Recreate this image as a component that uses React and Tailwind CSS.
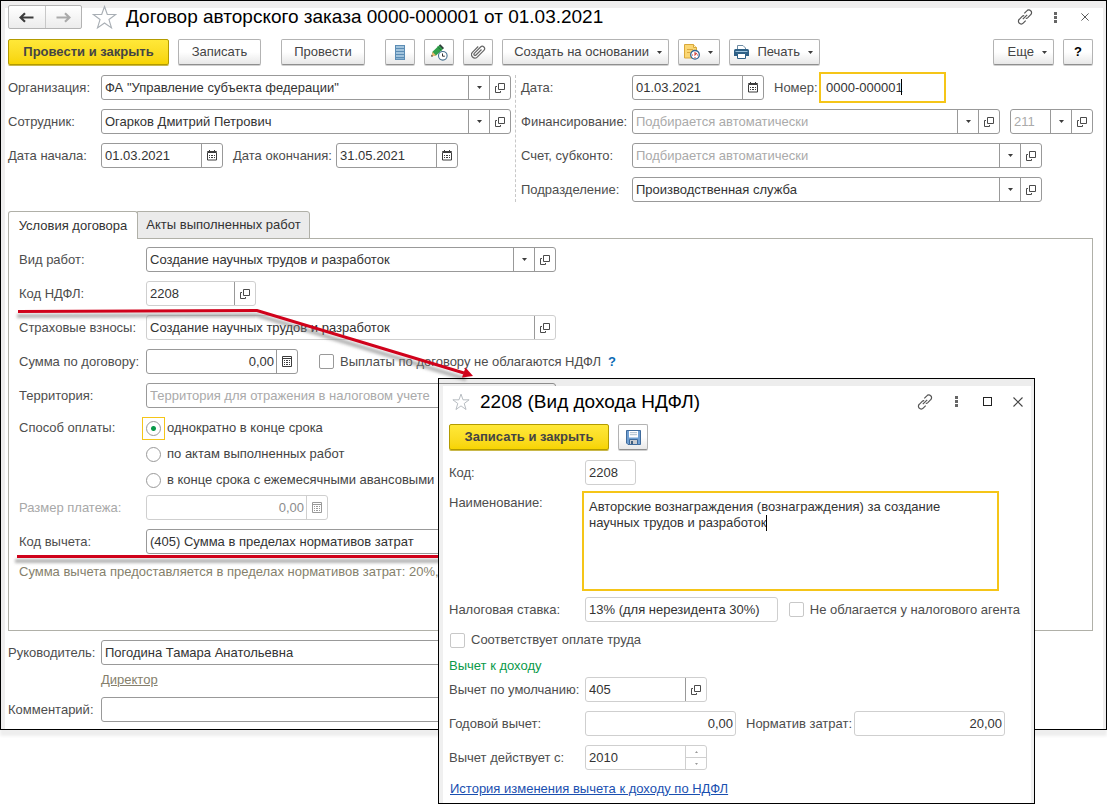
import { useId } from "react";

const FONT = "font-['Liberation_Sans',Arial,sans-serif]";

/* ---------- icons ---------- */

const OpenIcon = () => (
  <svg width="10" height="10" viewBox="0 0 10 10" fill="none" stroke="#4a4a4a" aria-hidden="true">
    <path d="M3.5 0.5h6v6h-6z" />
    <path d="M2 3.5H0.500v6h5V8" />
  </svg>
);

const DownIcon = () => (
  <svg width="5" height="3" viewBox="0 0 5 3" fill="#3c3c3c" aria-hidden="true">
    <path d="M0 0h5L2.500 3z" />
  </svg>
);

const CalendarIcon = () => (
  <svg width="10" height="11" viewBox="0 0 10 11" fill="none" stroke="#3c3c3c" aria-hidden="true">
    <path d="M2.500 0v2M7.500 0v2" />
    <path d="M0.500 1.500h9v1h-9z" />
    <path d="M0.500 3v7h9V3" />
    <path d="M2 5.500h1M4 5.500h2M7 5.500h1M2 7.500h1M4 7.500h2M7 7.500h1" />
  </svg>
);

const CalculatorIcon = ({ muted }) => (
  <svg width="10" height="11" viewBox="0 0 10 11" fill="none" stroke={muted ? "#999" : "#3c3c3c"} aria-hidden="true">
    <path d="M0.500 0.500h9v10h-9zM1 2.500h8" />
    <path d="M2 4.500h1M4 4.500h2M7 4.500h1M2 6.500h1M4 6.500h2M7 6.500h1M2 8.500h1M4 8.500h2M7 8.500h1" />
  </svg>
);

const StarIcon = ({ size }) => (
  <svg width={size} height={size} viewBox="0 0 24 24" fill="none" stroke="#a9afb5" strokeWidth="1.1" aria-hidden="true">
    <path d="M12 1.500l2.700 7.600h8.100l-6.500 4.900 2.400 8L12 17.200 5.300 22l2.400-8L1.200 9.100h8.100z" />
  </svg>
);

const LinkIcon = () => (
  <svg width="16" height="16" viewBox="0 0 16 16" fill="none" stroke="#555" strokeWidth="1.200" aria-hidden="true">
    <path d="M7.300 4.300l2.500-2.500a2.600 2.600 0 0 1 3.900 0 2.600 2.600 0 0 1 0 3.900l-2.900 2.900a2.600 2.600 0 0 1-2 .7" />
    <path d="M8.700 11.700l-2.500 2.500a2.600 2.600 0 0 1-3.900 0 2.600 2.600 0 0 1 0-3.900l2.900-2.900a2.600 2.600 0 0 1 2-.7" />
    <path d="M5.800 10.200l4.400-4.400" />
  </svg>
);

const DotsIcon = () => (
  <svg width="3" height="11" viewBox="0 0 3 11" fill="#666" aria-hidden="true">
    <path d="M0 0h3v3H0zM0 4h3v3H0zM0 8h3v3H0z" />
  </svg>
);

const CloseIcon = ({ size }) => (
  <svg width={size} height={size} viewBox="0 0 10 10" stroke="#444" strokeWidth="1.100" aria-hidden="true">
    <path d="M0.500 0.500l9 9M9.500 0.500l-9 9" />
  </svg>
);

const ArrowIcon = ({ color, flip }) => (
  <svg width="15" height="11" viewBox="0 0 15 11" aria-hidden="true" className={flip ? "rotate-180" : ""}>
    <path d="M14.500 5.500H2M6 1.200L1.500 5.500 6 9.800" fill="none" stroke={color} strokeWidth="2.200" />
  </svg>
);

const ListIcon = () => (
  <svg width="10" height="15" viewBox="0 0 10 15" aria-hidden="true">
    <path d="M0 0h10v15H0z" fill="#5c8db5" />
    <path d="M1 2h8M1 5h8M1 8h8M1 11h8" stroke="#b9d6ea" strokeWidth="1.600" />
    <path d="M1 13.600h8" stroke="#8fb8d6" />
  </svg>
);

const PencilIcon = () => (
  <svg width="17" height="17" viewBox="0 0 17 17" aria-hidden="true">
    <path d="M0.500 12l1-4.200L8.500 1l3.800 3.800-7.200 6.600z" fill="#31a04b" />
    <path d="M6.500 2.800l4 3.800" stroke="#1d7a36" strokeWidth="1" />
    <path d="M8 1.300l1.300-1.100 3.700 3.700-1.200 1.300z" fill="#2d3f3a" />
    <path d="M1.500 7.800l3.600 3.600L0.500 12.500z" fill="#e9b872" />
    <path d="M0.200 12.700l.5-2 1.500 1.500z" fill="#333" />
    <circle cx="11.800" cy="11.800" r="4.300" fill="#fff" stroke="#46708f" strokeWidth="1.100" />
    <path d="M11.500 9.500v2.700h2.300" fill="none" stroke="#333" />
  </svg>
);

const ClipIcon = () => (
  <svg width="15" height="15" viewBox="0 0 15 15" fill="none" stroke="#666" strokeWidth="1.200" aria-hidden="true">
    <path d="M10.500 4.500L5 10a1.200 1.200 0 0 1-1.700-1.700L9.600 2a2.300 2.300 0 0 1 3.300 3.300l-6.700 6.800a3.400 3.400 0 0 1-4.800-4.800L7.200 1.500" />
  </svg>
);

const NoteClockIcon = () => (
  <svg width="16" height="16" viewBox="0 0 16 16" aria-hidden="true">
    <path d="M0.500 0.500h9l3 3v10.500H0.500z" fill="#fbd774" stroke="#d9a83a" />
    <path d="M9.500 0.500v3h3" fill="#fff1c0" stroke="#d9a83a" />
    <path d="M3 5.500h6M3 8.500h3" stroke="#dba93e" />
    <circle cx="11" cy="10.800" r="4.300" fill="#fff" stroke="#2f6494" strokeWidth="1.300" />
    <path d="M11 8v3l1.800-1.800" fill="none" stroke="#d03c32" strokeWidth="1.100" />
    <path d="M11 13v1.200M8 11h1M13 11h1" stroke="#d03c32" />
  </svg>
);

const PrinterIcon = () => (
  <svg width="15" height="14" viewBox="0 0 15 14" aria-hidden="true">
    <path d="M3.500 5V0.500h5.500l2.500 2.500v2" fill="#fff" stroke="#6d8ba3" />
    <path d="M0 5.500q0-1.500 1.500-1.500h12q1.500 0 1.500 1.500V11H0z" fill="#2e6086" />
    <path d="M1.500 6.500h12" stroke="#9cc2dc" />
    <path d="M3.500 8.500h8v5h-8z" fill="#fff" stroke="#2e6086" />
  </svg>
);

const FloppyIcon = () => (
  <svg width="15" height="15" viewBox="0 0 15 15" aria-hidden="true">
    <path d="M0.500 0.500h14v14H2L0.500 13z" fill="#6f9fd2" stroke="#3f6b9c" />
    <path d="M3 1h9v6.500H3z" fill="#fff" />
    <path d="M4 2.700h7M4 4.700h7" stroke="#a9bccc" />
    <path d="M3.500 9.500h8v5h-8z" fill="#c9ccd0" stroke="#3f6b9c" />
    <path d="M5 11h2v3H5z" fill="#3f5f80" />
  </svg>
);

/* ---------- controls ---------- */

const BTN =
  "flex h-[26px] items-center rounded-[2px] border border-[#b3b3b3] border-b-[#8f8f8f] bg-linear-to-b from-white from-50% to-[#e8e8e8] text-[13px] leading-4 text-[#444] shadow-[0_1px_0_#d0d0d0]";
const PRIMARY =
  "flex h-[26px] items-center justify-center rounded-[2px] border border-[#b39b00] bg-linear-to-b from-[#ffe838] to-[#f7d400] text-[13px] leading-4 font-bold text-[#444] shadow-[0_1px_0_#c9b84a]";

const Button = ({ className, children, label }) => (
  <button type="button" aria-label={label} className={`${BTN} justify-center ${className}`}>
    {children}
  </button>
);

const MenuButton = ({ className, children, label }) => (
  <button type="button" aria-label={label} className={`${BTN} justify-end gap-2 pr-[6px] ${className}`}>
    {children}
    <DownIcon />
  </button>
);

const ADDONS = {
  down: [<DownIcon />, "Выбрать из списка"],
  open: [<OpenIcon />, "Открыть"],
  calendar: [<CalendarIcon />, "Календарь"],
  calc: [<CalculatorIcon />, "Калькулятор"],
  calcMuted: [<CalculatorIcon muted />, "Калькулятор"],
};

function Box({ id, label, value, placeholder, addons = [], className = "", light, right, text = "text-[#333]", disabled }) {
  const edge = light ? "border-[#cfcfcf]" : "border-[#999]";
  return (
    <div className={`flex h-[25px] min-w-0 rounded-[3px] border bg-white ${edge} ${className}`}>
      <input
        id={id}
        aria-label={label}
        defaultValue={value}
        placeholder={placeholder}
        disabled={disabled}
        className={`min-w-0 flex-1 bg-transparent text-[13px] leading-4 outline-none placeholder:text-[#aaa] ${right ? "px-[2px] text-right" : "px-[3px]"} ${text}`}
      />
      {addons.map((name) => (
        <button
          key={name}
          type="button"
          disabled={disabled}
          aria-label={ADDONS[name][1]}
          className={`flex w-[21px] shrink-0 items-center justify-center border-l ${disabled ? "border-[#cfcfcf]" : "border-[#999]"}`}
        >
          {ADDONS[name][0]}
        </button>
      ))}
    </div>
  );
}

const Label = ({ htmlFor, children, className = "", tone = "text-[#4d4d4d]" }) => (
  <label htmlFor={htmlFor} className={`shrink-0 whitespace-nowrap text-[13px] leading-4 ${tone} ${className}`}>
    {children}
  </label>
);

function Row({ label, labelClass, tone, children, ...box }) {
  const id = useId();
  return (
    <div className="flex h-[25px] items-center">
      <Label htmlFor={id} tone={tone} className={labelClass}>{label}</Label>
      <Box id={id} {...box} />
      {children}
    </div>
  );
}

const Check = ({ children, light, className = "" }) => (
  <label className={`flex items-center gap-[6px] whitespace-nowrap text-[13px] leading-4 text-[#4d4d4d] ${className}`}>
    <input
      type="checkbox"
      className={`size-[15px] appearance-none rounded-[2px] border bg-white ${light ? "border-[#c8c8c8]" : "border-[#999]"}`}
    />
    {children}
  </label>
);

const Radio = ({ children, checked }) => (
  <label className="flex h-[26px] items-center gap-[2px] whitespace-nowrap text-[13px] leading-4 text-[#444]">
    <span className={`flex size-[23px] items-center justify-center border ${checked ? "border-[#f5c518]" : "border-transparent"}`}>
      <input
        type="radio"
        name="payment"
        defaultChecked={checked}
        className="size-[15px] appearance-none rounded-full border border-[#999] bg-white checked:bg-[radial-gradient(circle,#0a9a4a_2px,white_3px)]"
      />
    </span>
    {children}
  </label>
);

/* ---------- contract window ---------- */

function Toolbar() {
  return (
    <div className="mt-[10px] flex items-center gap-[9px]">
      <button type="button" className={`${PRIMARY} w-[161px]`}>Провести и закрыть</button>
      <Button className="w-[83px]">Записать</Button>
      <Button className="ml-[11px] w-[84px]">Провести</Button>
      <Button label="Движения" className="ml-[11px] w-[30px]"><ListIcon /></Button>
      <Button label="Изменить" className="w-[30px]"><PencilIcon /></Button>
      <Button label="Файлы" className="w-[30px]"><ClipIcon /></Button>
      <MenuButton className="w-[167px]">Создать на основании</MenuButton>
      <MenuButton label="Задачи" className="w-[42px]"><NoteClockIcon /></MenuButton>
      <MenuButton className="w-[91px]"><PrinterIcon />Печать</MenuButton>
      <MenuButton className="ml-auto w-[61px]">Еще</MenuButton>
      <Button label="Справка" className="w-[30px] font-bold text-black">?</Button>
    </div>
  );
}

function HeaderForm() {
  const start = useId();
  const end = useId();
  const date = useId();
  const number = useId();
  const finance = useId();
  return (
    <div className="mt-[10px] flex">
      <div className="flex w-[508px] shrink-0 flex-col gap-[9px] border-r border-dashed border-[#c8c8c8] pr-[4px]">
        <Row label="Организация:" labelClass="w-[93px]" className="flex-1" value={'ФА "Управление субъекта федерации"'} addons={["down", "open"]} />
        <Row label="Сотрудник:" labelClass="w-[93px]" className="flex-1" value="Огарков Дмитрий Петрович" addons={["down", "open"]} />
        <div className="flex items-center">
          <Label htmlFor={start} className="w-[93px]">Дата начала:</Label>
          <Box id={start} className="w-[122px]" value="01.03.2021" addons={["calendar"]} />
          <Label htmlFor={end} className="ml-[10px] w-[103px]">Дата окончания:</Label>
          <Box id={end} className="w-[122px]" value="31.05.2021" addons={["calendar"]} />
        </div>
      </div>
      <div className="flex min-w-0 flex-1 flex-col gap-[9px] pl-[5px]">
        <div className="flex h-[25px] items-center">
          <Label htmlFor={date} className="w-[111px]">Дата:</Label>
          <Box id={date} className="w-[132px]" value="01.03.2021" addons={["calendar"]} />
          <Label htmlFor={number} className="ml-[10px] w-[45px]">Номер:</Label>
          <div className="relative flex h-[31px] w-[127px] items-center border-2 border-[#f5c518] bg-white">
            <input id={number} defaultValue="0000-000001" className="w-full px-[5px] text-[13px] leading-4 text-[#333] outline-none" />
            <span className="absolute top-[5px] left-[80px] h-4 w-px bg-black" />
          </div>
        </div>
        <div className="flex items-center">
          <Label htmlFor={finance} className="w-[111px]">Финансирование:</Label>
          <Box id={finance} className="flex-1" placeholder="Подбирается автоматически" addons={["down", "open"]} />
          <Box label="КОСГУ" className="ml-[10px] w-[83px]" value="211" text="text-[#aaa]" addons={["down", "open"]} />
        </div>
        <Row label="Счет, субконто:" labelClass="w-[111px]" className="mr-[51px] flex-1" placeholder="Подбирается автоматически" addons={["down", "open"]} />
        <Row label="Подразделение:" labelClass="w-[111px]" className="mr-[51px] flex-1" value="Производственная служба" addons={["down", "open"]} />
      </div>
    </div>
  );
}

function Terms() {
  return (
    <div className="mt-[9px]">
      <div role="tablist" className="flex">
        <button type="button" role="tab" aria-selected="true" className="relative z-10 h-[28px] w-[130px] rounded-t-[3px] border border-b-0 border-[#b0b0a8] bg-white text-[13px] leading-4 text-[#333]">
          Условия договора
        </button>
        <button type="button" role="tab" aria-selected="false" className="-ml-px h-[28px] w-[173px] rounded-tr-[3px] border border-[#b0b0a8] bg-[#ebebeb] text-[13px] leading-4 text-[#333]">
          Акты выполненных работ
        </button>
      </div>
      <div role="tabpanel" className="-mt-px border border-[#b0b0a8] px-[10px] pt-2 pb-12">
        <div className="flex flex-col gap-[9px]">
          <Row label="Вид работ:" labelClass="w-[127px]" className="w-[410px]" value="Создание научных трудов и разработок" addons={["down", "open"]} />
          <Row label="Код НДФЛ:" labelClass="w-[127px]" className="w-[110px]" light value="2208" addons={["open"]} />
          <Row label="Страховые взносы:" labelClass="w-[127px]" className="w-[410px]" light value="Создание научных трудов и разработок" addons={["open"]} />
          <Row label="Сумма по договору:" labelClass="w-[127px]" className="w-[152px]" right value="0,00" addons={["calc"]}>
            <Check className="ml-[21px]">Выплаты по договору не облагаются НДФЛ</Check>
            <button type="button" aria-label="Пояснение" className="ml-[7px] text-[13px] leading-4 font-bold text-[#0a6ab4]">?</button>
          </Row>
          <Row label="Территория:" labelClass="w-[127px]" className="w-[410px]" placeholder="Территория для отражения в налоговом учете" />
        </div>
        <fieldset className="mt-[7px] flex">
          <legend className="float-left w-[123px] text-[13px] leading-[26px] text-[#4d4d4d]">Способ оплаты:</legend>
          <div className="flex flex-col">
            <Radio checked>однократно в конце срока</Radio>
            <Radio>по актам выполненных работ</Radio>
            <Radio>в конце срока с ежемесячными авансовыми</Radio>
          </div>
        </fieldset>
        <div className="mt-[2px] flex flex-col gap-[9px]">
          <Row label="Размер платежа:" labelClass="w-[127px]" tone="text-[#a8a8a8]" className="w-[182px]" light right disabled text="text-[#8c8c8c]" value="0,00" addons={["calcMuted"]} />
          <Row label="Код вычета:" labelClass="w-[127px]" className="w-[410px]" value="(405) Сумма в пределах нормативов затрат" />
        </div>
        <p className="mt-2 text-[13px] leading-5 text-[#857f6c]">Сумма вычета предоставляется в пределах нормативов затрат: 20%,</p>
      </div>
    </div>
  );
}

function ContractWindow() {
  return (
    <main className="border border-black bg-white pt-1 pr-[13px] pb-[7px] pl-[7px] shadow-[inset_4px_7px_0_#efeeee,inset_-3px_0_0_#efeeee,0_6px_3px_#eee]">
      <header className="flex h-6 items-center">
        <div className="flex h-[24px] w-[74px] rounded-[2px] border border-[#b3b3b3] bg-linear-to-b from-white to-[#ececec]">
          <button type="button" aria-label="Назад" className="flex flex-1 items-center justify-center border-r border-[#c8c8c8]"><ArrowIcon color="#3c3c3c" /></button>
          <button type="button" aria-label="Вперед" className="flex flex-1 items-center justify-center"><ArrowIcon color="#aaa" flip /></button>
        </div>
        <button type="button" aria-label="В избранное" className="ml-[10px]"><StarIcon size={25} /></button>
        <h1 className="ml-[9px] text-[19px] leading-6 whitespace-nowrap text-black">Договор авторского заказа 0000-000001 от 01.03.2021</h1>
        <div className="mr-[4px] ml-auto flex items-center">
          <button type="button" aria-label="Ссылка"><LinkIcon /></button>
          <button type="button" aria-label="Меню" className="ml-[21px]"><DotsIcon /></button>
          <button type="button" aria-label="Закрыть" className="ml-[24px]"><CloseIcon size={8} /></button>
        </div>
      </header>
      <Toolbar />
      <HeaderForm />
      <Terms />
      <div className="mt-[9px]">
        <Row label="Руководитель:" labelClass="w-[93px]" className="w-[410px]" value="Погодина Тамара Анатольевна" />
        <a href="#director" className="mt-[7px] mb-[9px] ml-[93px] block w-fit text-[13px] leading-4 text-[#857f6c] underline">Директор</a>
        <Row label="Комментарий:" labelClass="w-[93px]" className="w-[410px]" />
      </div>
    </main>
  );
}

/* ---------- red pointer marks ---------- */

const Marks = () => (
  <svg className="pointer-events-none absolute top-[290px] left-0" width="500" height="290" viewBox="0 290 500 290" aria-hidden="true">
    <defs>
      <filter id="soft" x="-10%" y="-10%" width="120%" height="120%">
        <feGaussianBlur stdDeviation="1.500" />
      </filter>
    </defs>
    <g stroke="#777" strokeOpacity="0.550" strokeWidth="4" fill="none" filter="url(#soft)">
      <path d="M17 316L257 315L466 379" />
      <path d="M15 561L440 561" />
    </g>
    <g stroke="#d0021b" strokeWidth="3" fill="none">
      <path d="M18 311.500L257 310.500L464 373" />
      <path d="M17 556.500L440 556.500" />
    </g>
    <path d="M473 376L462 377.500L465.500 367.500z" fill="#d0021b" />
  </svg>
);

/* ---------- income code dialog ---------- */

function IncomeDialog() {
  const name = useId();
  const rate = useId();
  const norm = useId();
  const since = useId();
  const year = useId();
  return (
    <section role="dialog" aria-label="Вид дохода НДФЛ" className="absolute top-[378px] left-[438px] w-[597px] border border-black">
      <div className="h-[7px] bg-black/7" />
      <div className="bg-white pr-[14px] pb-[6px] pl-[10px] shadow-[inset_4px_0_0_#f0f0f0,inset_-3px_0_0_#f0f0f0]">
        <header className="flex h-[31px] items-center">
          <button type="button" aria-label="В избранное" className="ml-[3px]"><StarIcon size={18} /></button>
          <h2 className="ml-[10px] text-[19px] leading-6 whitespace-nowrap text-black">2208 (Вид дохода НДФЛ)</h2>
          <div className="mr-[-4px] ml-auto flex items-center">
            <button type="button" aria-label="Ссылка"><LinkIcon /></button>
            <button type="button" aria-label="Меню" className="ml-[22px]"><DotsIcon /></button>
            <button type="button" aria-label="Развернуть" className="ml-[25px] size-[9px] border border-[#222]" />
            <button type="button" aria-label="Закрыть" className="mr-[1px] ml-[21px]"><CloseIcon size={10} /></button>
          </div>
        </header>
        <div className="mt-[7px] flex gap-[9px]">
          <button type="button" className={`${PRIMARY} w-[160px]`}>Записать и закрыть</button>
          <Button label="Записать" className="w-[30px]"><FloppyIcon /></Button>
        </div>
        <div className="mt-[10px]">
          <Row label="Код:" labelClass="w-[136px]" className="w-[51px]" light value="2208" />
        </div>
        <div className="mt-[6px] flex">
          <Label htmlFor={name} className="mt-[4px] w-[133px]">Наименование:</Label>
          <div className="relative h-[100px] w-[417px]">
            <textarea
              id={name}
              defaultValue={"Авторские вознаграждения (вознаграждения) за создание\nнаучных трудов и разработок"}
              className="block size-full resize-none border-2 border-[#f5c518] bg-white px-[5px] py-[6px] text-[13px] leading-4 text-[#333] outline-none"
            />
            <span className="absolute top-[24px] left-[184px] h-4 w-px bg-black" />
          </div>
        </div>
        <div className="mt-[6px] flex items-center">
          <Label htmlFor={rate} className="w-[136px]">Налоговая ставка:</Label>
          <Box id={rate} className="w-[194px]" light value="13% (для нерезидента 30%)" />
          <Check light className="ml-[11px]">Не облагается у налогового агента</Check>
        </div>
        <Check light className="mt-[10px] ml-px">Соответствует оплате труда</Check>
        <h3 className="mt-[10px] text-[13px] leading-4 text-[#0a9a4a]">Вычет к доходу</h3>
        <div className="mt-[3px] flex flex-col gap-[9px]">
          <Row label="Вычет по умолчанию:" labelClass="w-[136px]" className="w-[122px]" light value="405" addons={["open"]} />
          <div className="flex items-center">
            <Label htmlFor={year} className="w-[136px]">Годовой вычет:</Label>
            <Box id={year} className="w-[151px]" light right value="0,00" />
            <Label htmlFor={norm} className="ml-[10px] w-[108px]">Норматив затрат:</Label>
            <Box id={norm} className="w-[151px]" light right value="20,00" />
          </div>
          <div className="flex items-center">
            <Label htmlFor={since} className="w-[136px]">Вычет действует с:</Label>
            <div className="flex h-[25px] w-[122px] rounded-[3px] border border-[#cfcfcf]">
              <input id={since} defaultValue="2010" className="min-w-0 flex-1 px-[3px] text-[13px] leading-4 text-[#333] outline-none" />
              <div className="flex w-[21px] flex-col border-l border-[#cfcfcf]">
                <button type="button" aria-label="Больше" className="flex flex-1 items-center justify-center border-b border-[#cfcfcf]">
                  <svg width="3" height="2" viewBox="0 0 3 2" fill="#999" aria-hidden="true"><path d="M0 2L1.500 0 3 2z" /></svg>
                </button>
                <button type="button" aria-label="Меньше" className="flex flex-1 items-center justify-center">
                  <svg width="3" height="2" viewBox="0 0 3 2" fill="#999" aria-hidden="true"><path d="M0 0l1.500 2L3 0z" /></svg>
                </button>
              </div>
            </div>
          </div>
        </div>
        <a href="#history" className="mt-[11px] ml-px block w-fit text-[13px] leading-4 text-[#1a4fb0] underline">История изменения вычета к доходу по НДФЛ</a>
      </div>
    </section>
  );
}

export default function App() {
  return (
    <div className={`relative min-h-screen bg-white ${FONT}`}>
      <ContractWindow />
      <Marks />
      <IncomeDialog />
    </div>
  );
}
